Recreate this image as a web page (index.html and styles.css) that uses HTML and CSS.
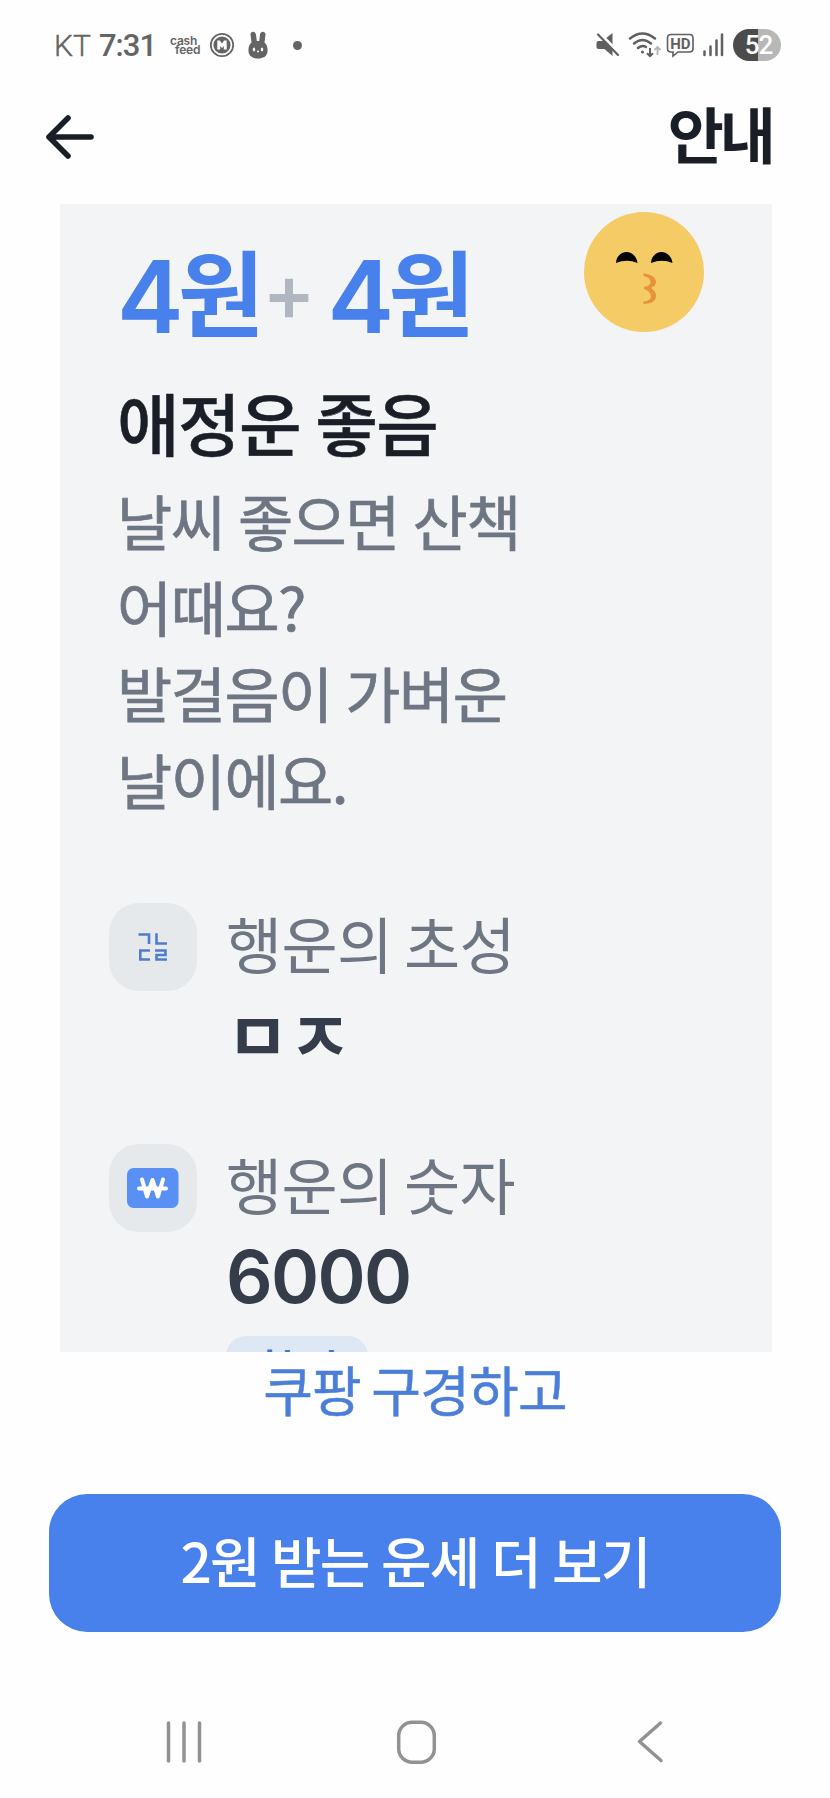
FILE: index.html
```html
<!DOCTYPE html>
<html lang="ko">
<head>
<meta charset="utf-8">
<title>안내</title>
<link rel="stylesheet" href="styles.css">
</head>
<body>
<div class="screen">
  <div class="status">
    <span class="carrier">KT</span>
    <span class="clock">7:31</span>
    <span class="cashfeed"><span>cash</span><span class="feed">feed</span></span>
    <svg class="coin" width="26" height="26" viewBox="0 0 26 26"><circle cx="13" cy="13" r="11.2" fill="none" stroke="#646464" stroke-width="1.7"/><circle cx="13" cy="13" r="8.6" fill="#646464"/><path d="M8.300 17.500V8.500H10.800L13 11.500L15.200 8.500H17.700V17.500H14.800V14L13 16L11.200 14V17.500Z" fill="#fff"/></svg>
    <svg class="rabbit" width="20" height="28" viewBox="0 0 20 28"><path d="M2.500 3.500C2.500 0 7.500-.3 8 3.500l.8 6.500h2.400l.8-6.500c.5-3.800 5.500-3.500 5.500 0l-1 8C19 13.500 19.800 17 19.500 20.500 19 25.500 15 27.500 10 27.500S1 25.500.5 20.500C.2 17 1 13.500 3.500 11.500Z" fill="#646464"/><ellipse cx="6" cy="18.500" rx="1.200" ry="2" fill="#fff"/><ellipse cx="14" cy="18.500" rx="1.200" ry="2" fill="#fff"/><circle cx="10" cy="20.500" r="1" fill="#fff"/></svg>
    <span class="dot"></span>
    <svg class="indicators" width="132" height="32" viewBox="594 29 132 32">
      <path d="M598.500 41h4l10-8v23l-8-7h-6q-2 0-2-2v-4q0-2 2-2Z" fill="#606060"/>
      <path d="M599.500 33L619.500 53.500" stroke="#fff" stroke-width="3"/>
      <path d="M598 34.500L618 55" stroke="#606060" stroke-width="2.200" stroke-linecap="round"/>
      <g fill="none" stroke="#606060" stroke-width="2.400" stroke-linecap="round"><path d="M630 38.500Q642.500 28.500 655 38.500"/><path d="M634 43.500Q642.500 36.500 651 43.500"/><path d="M638 48Q642.500 44.500 646 47"/></g>
      <circle cx="642.500" cy="52" r="1.600" fill="#606060"/>
      <path d="M650 48v8M647 53.200l3 3 3-3" fill="none" stroke="#606060" stroke-width="2"/>
      <path d="M657.500 55v-8M654.500 50l3-3 3 3" fill="none" stroke="#b5b5b5" stroke-width="1.800"/>
      <path d="M671 34.500h18.500q3.500 0 3.500 3.500v10.500q0 3.500-3.500 3.500H678l-5 4v-4h-2q-3.500 0-3.500-3.500V38q0-3.500 3.500-3.500Z" fill="none" stroke="#606060" stroke-width="1.600"/>
      <text x="680.300" y="49" text-anchor="middle" class="hd">HD</text>
      <path d="M704.500 51.500v3.500M710.500 46.500v8.500M716.500 40.500v14.500M722 34.500v20.500" stroke="#606060" stroke-width="2.500" stroke-linecap="round"/>
    </svg>
    <span class="battery">52</span>
  </div>

  <header class="header">
    <svg width="52" height="50" viewBox="0 0 52 50" fill="none" stroke="#1a1e27" stroke-width="5.600" stroke-linecap="round" stroke-linejoin="round"><path d="M24 6L5 25L24 44M5 25H47"/></svg>
    <h1 class="heading">안내</h1>
  </header>

  <main class="panel">
    <div class="top">
      <div class="amount"><span class="digit">4</span><span>원</span><svg class="plus" width="40" height="40" viewBox="0 0 40 40"><path d="M.7 20H39.300M20 .7V39.300" stroke="#b0b7c0" stroke-width="8"/></svg><span class="digit">4</span><span>원</span></div>
      <svg class="face" width="120" height="120" viewBox="0 0 120 120">
        <circle cx="60" cy="60" r="60" fill="#f5cb66"/>
        <path d="M32 51C32 45 37 40 42.500 40S53 45 53.500 51Q43 46.500 32 51ZM67 51C67 45 72 40 77.500 40S88 45 88.500 51Q78 46.500 67 51Z" fill="#050300"/>
        <path d="M59.500 61.500C67 62 72 65.500 72 69.500Q72 74 67 76Q72 79 72 84C72 89 67 92 59.500 92V89.500C64 89 67 87.500 67 84.500Q66.500 79 60 77V75Q66.500 74 66.500 69.500C66 66.500 63 64.500 59.500 64Z" fill="#e8923a"/>
      </svg>
    </div>
    <h2 class="fortune">애정운 좋음</h2>
    <p class="message">날씨 좋으면 산책<br>어때요?<br>발걸음이 가벼운<br>날이에요.</p>

    <section class="item">
      <div class="badge">
        <svg width="30" height="30" viewBox="0 0 30 30" fill="none" stroke="#4f7dcc" stroke-width="2.600"><path d="M.5 2.500H11V12M18.500 1.200V11.500H29M12 18.500H2.300V27.500H12M17 18.500H27.500V23H18.500V27.500H29"/></svg>
      </div>
      <div class="detail">
        <div class="label">행운의 초성</div>
        <div class="value jamo">ㅁㅈ</div>
      </div>
    </section>
    <section class="item">
      <div class="badge">
        <svg width="52" height="40" viewBox="0 0 52 40"><rect width="51.500" height="40" rx="6.500" fill="#5890f4"/><path d="M15 11.500L20 28.500L25.500 12L31 28.500L36 11.500M12 20.500H39" fill="none" stroke="#fff" stroke-width="4" stroke-linecap="round" stroke-linejoin="round"/></svg>
      </div>
      <div class="detail">
        <div class="label">행운의 숫자</div>
        <div class="value">6000</div>
        <span class="chip">확인</span>
      </div>
    </section>
  </main>

  <a class="link">쿠팡 구경하고</a>
  <button class="cta">2원 받는 운세 더 보기</button>

  <nav class="nav">
    <svg width="36" height="44" viewBox="0 0 36 44" stroke="#929292" stroke-width="3.500" stroke-linecap="round"><path d="M2.500 3V41M18 3V41M33.500 3V41"/></svg>
    <svg width="44" height="44" viewBox="0 0 44 44"><rect x="3.700" y="2.200" width="35.600" height="40" rx="13.500" fill="none" stroke="#929292" stroke-width="3.500"/></svg>
    <svg width="28" height="44" viewBox="0 0 28 44" fill="none" stroke="#929292" stroke-width="3.500" stroke-linecap="round" stroke-linejoin="round"><path d="M23.500 3L2.500 21.500L24 40.500"/></svg>
  </nav>
</div>
</body>
</html>
```

FILE: styles.css
```css
* { box-sizing: border-box; }
body {
  margin: 0;
  background: #fefefe;
  font-family: "Noto Sans CJK KR", sans-serif;
}
.screen {
  width: 830px;
  height: 1798px;
  display: flex;
  flex-direction: column;
  overflow: hidden;
}
.status {
  height: 90px;
  padding: 0 49px 0 54px;
  display: flex;
  align-items: center;
  flex: none;
  color: #646464;
  font-family: Roboto, sans-serif;
}
.carrier { width: 45px; font-size: 30px; font-weight: 300; -webkit-text-stroke: .4px #646464; }
.clock { width: 71px; font-size: 31px; font-weight: 500; letter-spacing: -1px; }
.cashfeed {
  width: 39px;
  display: flex;
  flex-direction: column;
  font: 600 12px/9px Inter, sans-serif;
  letter-spacing: -.2px;
}
.feed { padding-left: 5px; }
.coin { margin-right: 13px; }
.dot { width: 9px; height: 9px; margin-left: 25px; border-radius: 50%; background: #646464; }
.indicators { margin-left: auto; margin-right: 7px; }
.hd { font: 700 15px Roboto, sans-serif; fill: #606060; }
.battery {
  width: 48px;
  height: 32px;
  border-radius: 16px;
  background: linear-gradient(90deg, #4c4c4c 52%, #b7b7b7 52%);
  color: #fff;
  font: 500 26px/33px Roboto, sans-serif;
  letter-spacing: -1px;
  text-align: center;
  padding-left: 3px;
}
.header {
  height: 114px;
  flex: none;
  padding: 22px 58px 0 44px;
  display: flex;
  align-items: flex-start;
  justify-content: space-between;
}
.heading {
  margin: -19px 0 0;
  font-size: 61px;
  line-height: 80px;
  font-weight: 700;
  letter-spacing: -4px;
  color: #1a1e27;
}
.panel {
  width: 712px;
  height: 1148px;
  flex: none;
  margin-left: 60px;
  padding: 8px 60px 0 49px;
  background: #f2f4f6;
  overflow: hidden;
}
.top {
  display: flex;
  align-items: flex-start;
  justify-content: space-between;
  height: 170px;
  padding-left: 8px;
  padding-right: 8px;
}
.amount {
  display: flex;
  align-items: center;
  padding-top: 22px;
  font-size: 94px;
  line-height: 110px;
  font-weight: 700;
  color: #4880ec;
}
.amount .digit { width: 61px; padding-top: 8px; box-sizing: content-box; height: 102px; font-family: Inter, sans-serif; font-size: 100px; font-weight: 600; letter-spacing: -4px; }
.plus { margin: 17px 18px 0 5px; }
.fortune {
  margin: 0 0 15px 8px;
  font-size: 68px;
  line-height: 80px;
  font-weight: 500;
  letter-spacing: -1.500px;
  word-spacing: -2.500px;
  color: #1a1e27;
  -webkit-text-stroke: .5px #1a1e27;
}
.message {
  margin: 0 0 81px 8px;
  font-size: 60px;
  line-height: 86.200px;
  font-weight: 400;
  letter-spacing: -1.500px;
  word-spacing: -1.800px;
  color: #6d7682;
  -webkit-text-stroke: .7px #6d7682;
}
.item { display: flex; gap: 29px; height: 240.700px; }
.badge {
  width: 88px;
  height: 88px;
  flex: none;
  display: flex;
  align-items: center;
  justify-content: center;
  border-radius: 30px;
  background: #e6e9ec;
}
.label {
  font-size: 61px;
  line-height: 80px;
  letter-spacing: -.6px;
  word-spacing: -5px;
  color: #6d7682;
  white-space: nowrap;
}
.value {
  margin-top: 13px;
  font: 600 73px/80px Inter, sans-serif;
  letter-spacing: -1.700px;
  color: #353d4a;
}
.jamo { margin-top: 10px; font: 600 69px/80px "Noto Sans CJK KR", sans-serif; letter-spacing: -1px; }
.chip {
  display: block;
  width: 142px;
  height: 64px;
  margin-top: 19px;
  border-radius: 20px;
  background: #dee8f5;
  color: #4674c4;
  font-size: 46px;
  line-height: 64px;
  font-weight: 500;
  text-align: center;
}
.link {
  height: 72px;
  flex: none;
  padding-top: 1px;
  text-align: center;
  font-size: 54px;
  line-height: 72px;
  letter-spacing: -.8px;
  word-spacing: -4px;
  color: #4a7ed8;
  -webkit-text-stroke: .5px #4a7ed8;
}
.cta {
  width: 732px;
  height: 138px;
  flex: none;
  margin: 70px 0 0 49px;
  padding: 0 0 8px;
  border: 0;
  border-radius: 38px;
  background: #4880ec;
  color: #fff;
  font: 500 55px/130px "Noto Sans CJK KR", sans-serif;
  letter-spacing: -1.900px;
  word-spacing: -1px;
}
.nav {
  height: 166px;
  padding: 88px 165px 0 166px;
  display: flex;
  justify-content: space-between;
}
.nav svg:nth-child(2) { margin-left: -6px; }
```
